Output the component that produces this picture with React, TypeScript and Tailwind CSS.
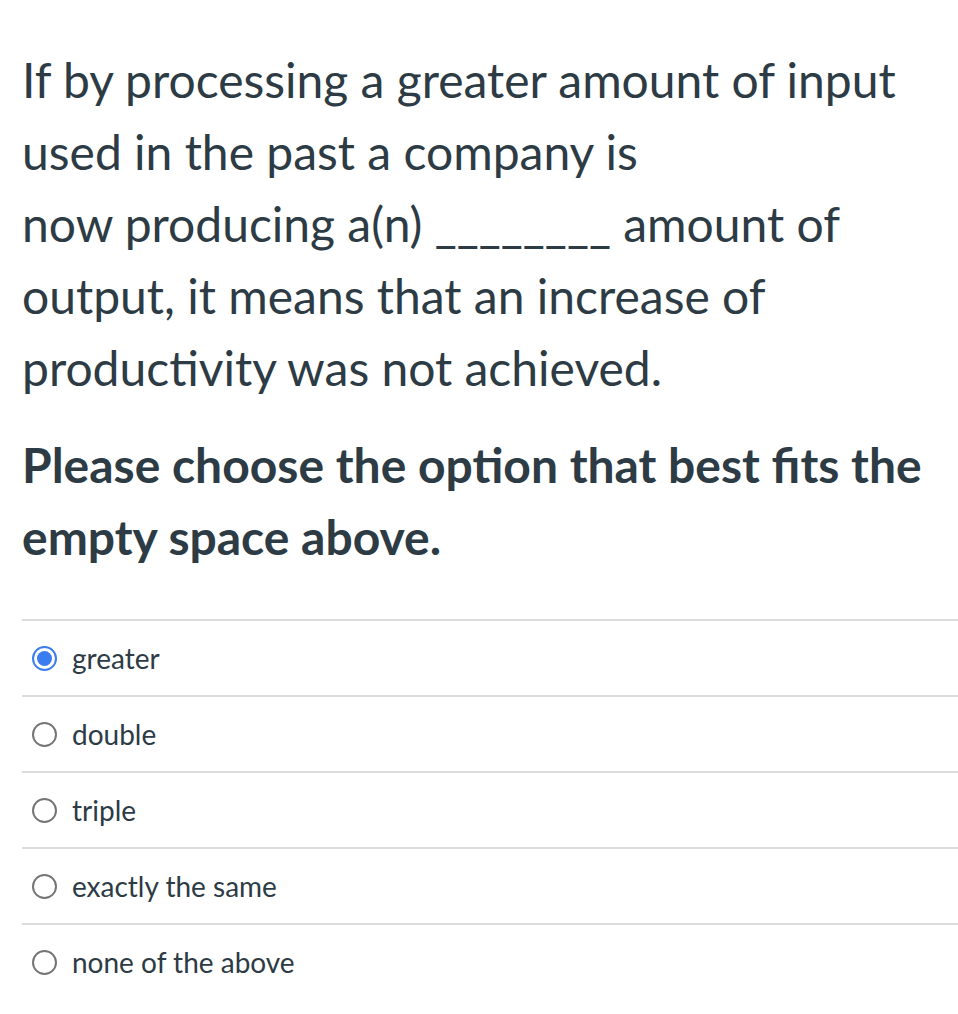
import React from "react";

const options = ["greater", "double", "triple", "exactly the same", "none of the above"];

function Radio({ checked }: { checked: boolean }) {
  if (checked) {
    return (
      <span className="flex h-[25px] w-[25px] shrink-0 items-center justify-center rounded-full border-2 border-[#3b7cf0] bg-white">
        <span className="h-[15px] w-[15px] rounded-full bg-[#3b7cf0]" />
      </span>
    );
  }
  return <span className="h-[25px] w-[25px] shrink-0 rounded-full border-2 border-[#757575] bg-white" />;
}

export default function App() {
  return (
    <div className="min-h-[1014px] w-[958px] bg-white pl-[22px] pt-[44px] text-[#2d3b45] [font-family:Lato,'Noto_Sans',sans-serif]">
      <p className="text-[48px] leading-[72px]">
        If by processing a greater amount of input used in the past a company is
        <br />
        now producing a(n) ________ amount of output, it means that an increase of productivity was not achieved.
      </p>
      <p className="mt-[25px] pr-[20px] text-[48px] font-bold leading-[72px]">
        Please choose the option that best fits the empty space above.
      </p>
      <div className="mt-[46px]">
        {options.map((o, i) => (
          <div key={o} className="flex h-[76px] items-center gap-[15px] border-t-2 border-[#dcdcdc] pl-[10px]">
            <Radio checked={i === 0} />
            <span className="text-[28px]">{o}</span>
          </div>
        ))}
      </div>
    </div>
  );
}
